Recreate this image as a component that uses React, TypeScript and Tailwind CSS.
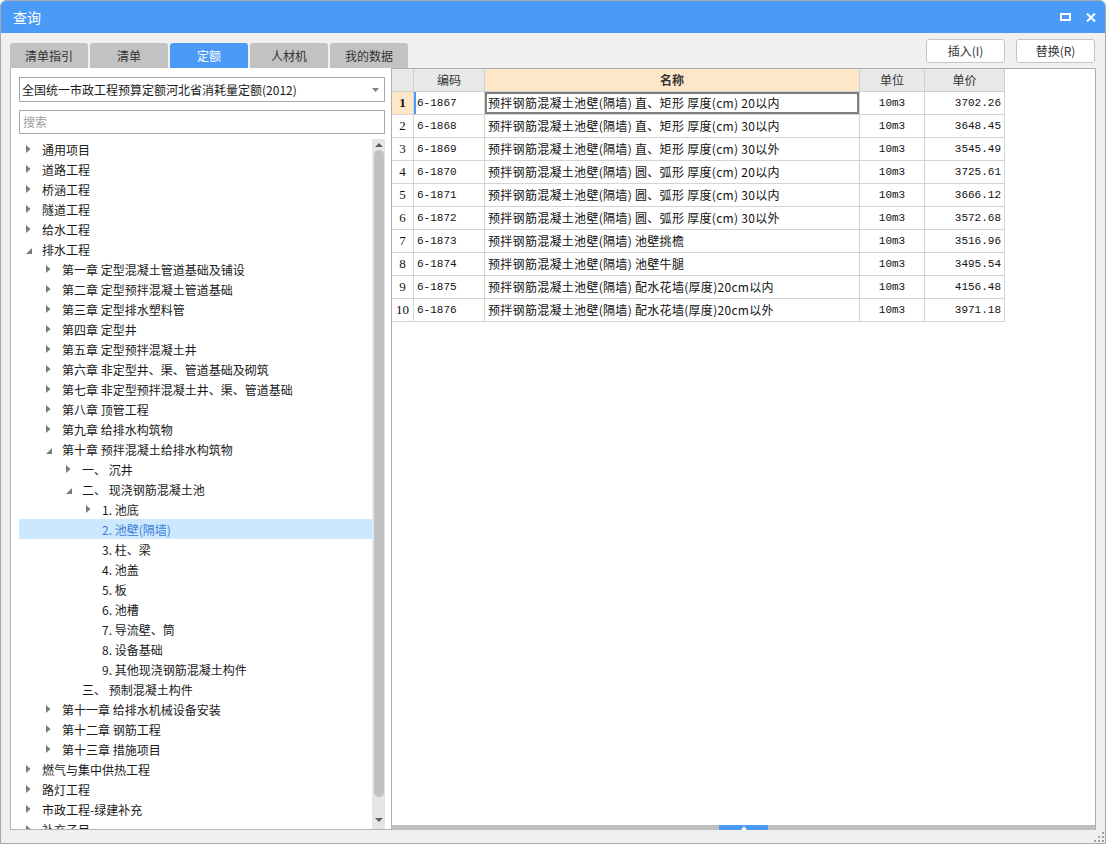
import React from 'react'

type Node = { l: number; t: string; a?: 'r' | 'd'; sel?: boolean }

const tree: Node[] = [
  { l: 0, t: '通用项目', a: 'r' },
  { l: 0, t: '道路工程', a: 'r' },
  { l: 0, t: '桥涵工程', a: 'r' },
  { l: 0, t: '隧道工程', a: 'r' },
  { l: 0, t: '给水工程', a: 'r' },
  { l: 0, t: '排水工程', a: 'd' },
  { l: 1, t: '第一章 定型混凝土管道基础及铺设', a: 'r' },
  { l: 1, t: '第二章 定型预拌混凝土管道基础', a: 'r' },
  { l: 1, t: '第三章 定型排水塑料管', a: 'r' },
  { l: 1, t: '第四章 定型井', a: 'r' },
  { l: 1, t: '第五章 定型预拌混凝土井', a: 'r' },
  { l: 1, t: '第六章 非定型井、渠、管道基础及砌筑', a: 'r' },
  { l: 1, t: '第七章 非定型预拌混凝土井、渠、管道基础', a: 'r' },
  { l: 1, t: '第八章 顶管工程', a: 'r' },
  { l: 1, t: '第九章 给排水构筑物', a: 'r' },
  { l: 1, t: '第十章 预拌混凝土给排水构筑物', a: 'd' },
  { l: 2, t: '一、 沉井', a: 'r' },
  { l: 2, t: '二、 现浇钢筋混凝土池', a: 'd' },
  { l: 3, t: '1. 池底', a: 'r' },
  { l: 3, t: '2. 池壁(隔墙)', sel: true },
  { l: 3, t: '3. 柱、梁' },
  { l: 3, t: '4. 池盖' },
  { l: 3, t: '5. 板' },
  { l: 3, t: '6. 池槽' },
  { l: 3, t: '7. 导流壁、筒' },
  { l: 3, t: '8. 设备基础' },
  { l: 3, t: '9. 其他现浇钢筋混凝土构件' },
  { l: 2, t: '三、 预制混凝土构件' },
  { l: 1, t: '第十一章 给排水机械设备安装', a: 'r' },
  { l: 1, t: '第十二章 钢筋工程', a: 'r' },
  { l: 1, t: '第十三章 措施项目', a: 'r' },
  { l: 0, t: '燃气与集中供热工程', a: 'r' },
  { l: 0, t: '路灯工程', a: 'r' },
  { l: 0, t: '市政工程-绿建补充', a: 'r' },
  { l: 0, t: '补充子目', a: 'r' },
]

const indent = ['pl-[7px]', 'pl-[27px]', 'pl-[47px]', 'pl-[67px]']

const base = '预拌钢筋混凝土池壁(隔墙) '
const rows = [
  ['6-1867', base + '直、矩形 厚度(cm) 20以内', '10m3', '3702.26'],
  ['6-1868', base + '直、矩形 厚度(cm) 30以内', '10m3', '3648.45'],
  ['6-1869', base + '直、矩形 厚度(cm) 30以外', '10m3', '3545.49'],
  ['6-1870', base + '圆、弧形 厚度(cm) 20以内', '10m3', '3725.61'],
  ['6-1871', base + '圆、弧形 厚度(cm) 30以内', '10m3', '3666.12'],
  ['6-1872', base + '圆、弧形 厚度(cm) 30以外', '10m3', '3572.68'],
  ['6-1873', base + '池壁挑檐', '10m3', '3516.96'],
  ['6-1874', base + '池壁牛腿', '10m3', '3495.54'],
  ['6-1875', base + '配水花墙(厚度)20cm以内', '10m3', '4156.48'],
  ['6-1876', base + '配水花墙(厚度)20cm以外', '10m3', '3971.18'],
]

const tabs = ['清单指引', '清单', '定额', '人材机', '我的数据']

const Arrow = ({ a }: { a?: 'r' | 'd' }) => (
  <span className="w-[16px] h-[20px] flex items-center shrink-0">
    {a === 'r' && (
      <svg width="5" height="8" viewBox="0 0 5 8">
        <polygon points="0,0 4.5,4 0,8" fill="#7c7c7c" />
      </svg>
    )}
    {a === 'd' && (
      <svg width="6" height="6" viewBox="0 0 6 6" className="mt-[3px]">
        <polygon points="6,0 6,6 0,6" fill="#7c7c7c" />
      </svg>
    )}
  </span>
)

const mono = "font-['Liberation_Mono','Noto_Sans_CJK_SC',monospace]"

const App = () => {
  return (
    <div className="w-[1106px] h-[844px] flex flex-col bg-[#f0f0f0] border border-[#a8a8a8] rounded-t-[6px] overflow-hidden font-['Noto_Sans_CJK_SC',sans-serif] text-[#1a1a1a]">
      {/* title bar */}
      <div className="h-[32px] shrink-0 bg-[#4a9bf7] flex items-center justify-between pl-[12px] pr-[9px]">
        <span className="text-white text-[14px]">查询</span>
        <div className="flex items-center gap-[15px]">
          <svg width="11" height="8" viewBox="0 0 11 8">
            <rect x="1" y="1" width="9" height="6" fill="none" stroke="white" strokeWidth="2" />
          </svg>
          <svg width="10" height="9" viewBox="0 0 10 9">
            <path d="M1 0.5 L9 8.5 M9 0.5 L1 8.5" stroke="white" strokeWidth="2" />
          </svg>
        </div>
      </div>

      {/* tabs + buttons */}
      <div className="h-[35px] shrink-0 flex justify-between pl-[9px] pr-[10px]">
        <div className="flex items-end gap-[2px]">
          {tabs.map((t) => (
            <div
              key={t}
              className={`w-[78px] h-[25px] rounded-t-[3px] flex items-center justify-center text-[12px] ${
                t === '定额' ? 'bg-[#4a9bf7] text-white' : 'bg-[#c2c2c2] text-[#333]'
              }`}
            >
              {t}
            </div>
          ))}
        </div>
        <div className="flex gap-[11px] mt-[6px]">
          <button className="w-[79px] h-[24px] bg-white border border-[#c4c4c4] rounded-[3px] text-[12px] text-[#333]">
            插入(I)
          </button>
          <button className="w-[79px] h-[24px] bg-white border border-[#c4c4c4] rounded-[3px] text-[12px] text-[#333]">
            替换(R)
          </button>
        </div>
      </div>

      {/* main */}
      <div className="h-[762px] shrink-0 flex ml-[9px] mr-[9px]">
        {/* left panel */}
        <div className="w-[381px] shrink-0 bg-white border-l border-b border-[#b4b4b4] flex flex-col pt-[9px] pl-[8px] pr-[6px]">
          <div className="h-[25px] shrink-0 border border-[#a6a6a6] flex items-center justify-between pl-[2px] pr-[5px] text-[12px]">
            <span>全国统一市政工程预算定额河北省消耗量定额(2012)</span>
            <svg width="7" height="4" viewBox="0 0 7 4">
              <polygon points="0,0 7,0 3.5,4" fill="#808080" />
            </svg>
          </div>
          <div className="h-[24px] shrink-0 mt-[8px] border border-[#a6a6a6] flex items-center pl-[3px] text-[12px] text-[#a0a0a0]">
            搜索
          </div>
          <div className="flex-1 mt-[5px] flex overflow-hidden">
            <div className="w-[353px] overflow-hidden">
              {tree.map((n, i) => (
                <div
                  key={i}
                  className={`h-[20px] flex items-center text-[12px] leading-[20px] whitespace-nowrap ${indent[n.l]} ${
                    n.sel ? 'bg-[#cce8ff] text-[#3d7fd6]' : ''
                  }`}
                >
                  <Arrow a={n.a} />
                  <span className="pt-[1px]">{n.t}</span>
                </div>
              ))}
            </div>
            <div className="w-[13px] bg-[#e6e6e6] flex flex-col items-center">
              <div className="h-[11px] flex items-center">
                <svg width="8" height="4" viewBox="0 0 8 4">
                  <polygon points="0,4 8,4 4,0" fill="#606060" />
                </svg>
              </div>
              <div className="w-[10px] h-[647px] rounded-full bg-[#c1c1c1]" />
              <div className="flex-1" />
              <div className="h-[14px] flex items-start pt-[3px]">
                <svg width="8" height="4" viewBox="0 0 8 4">
                  <polygon points="0,0 8,0 4,4" fill="#606060" />
                </svg>
              </div>
            </div>
          </div>
        </div>

        {/* grid */}
        <div className="flex-1 bg-white border-l border-t border-r border-[#aeaeae] flex flex-col">
          <div className="flex-1">
            <div className="flex h-[23px] text-[12px] text-[#333]">
              <div className="w-[22px] bg-[#e8e8e8] border-r border-b border-[#d0d0d0]" />
              <div className="w-[71px] bg-[#e8e8e8] border-r border-b border-[#d0d0d0] flex items-center justify-center">编码</div>
              <div className="w-[375px] bg-[#fee6c9] border-r border-b border-[#d0d0d0] flex items-center justify-center font-bold">名称</div>
              <div className="w-[65px] bg-[#e8e8e8] border-r border-b border-[#d0d0d0] flex items-center justify-center">单位</div>
              <div className="w-[80px] bg-[#e8e8e8] border-r border-b border-[#d0d0d0] flex items-center justify-center">单价</div>
            </div>
            {rows.map((r, i) => (
              <div key={r[0]} className="flex h-[23px] text-[#111]">
                <div
                  className={`w-[22px] border-r border-b border-[#d4d4d4] flex items-center justify-center font-['Liberation_Serif',serif] text-[13px] ${
                    i === 0 ? 'bg-[#fee6c9] font-bold' : 'bg-white'
                  }`}
                >
                  {i + 1}
                </div>
                <div
                  className={`w-[71px] border-r border-b border-[#d4d4d4] flex items-center pl-[3px] text-[11px] ${mono} ${
                    i === 0 ? 'shadow-[inset_2px_0_0_#4a9bf7]' : ''
                  }`}
                >
                  {r[0]}
                </div>
                <div
                  className={`w-[375px] border-r border-b border-[#d4d4d4] flex items-center pl-[3px] text-[12px] tracking-[0.3px] whitespace-nowrap ${
                    i === 0 ? 'shadow-[inset_0_0_0_2px_#7e7e7e]' : ''
                  }`}
                >
                  {r[1]}
                </div>
                <div className={`w-[65px] border-r border-b border-[#d4d4d4] flex items-center justify-center text-[11px] ${mono}`}>
                  {r[2]}
                </div>
                <div className={`w-[80px] border-r border-b border-[#d4d4d4] flex items-center justify-end pr-[3px] text-[11px] ${mono}`}>
                  {r[3]}
                </div>
              </div>
            ))}
          </div>
          <div className="h-[5px] bg-[#bfbfbf] flex justify-center">
            <div className="w-[49px] h-[5px] bg-[#4a9bf7] flex items-center justify-center">
              <svg width="6" height="4" viewBox="0 0 6 4">
                <polygon points="0,4 6,4 3,0" fill="white" />
              </svg>
            </div>
          </div>
        </div>
      </div>

      {/* bottom strip */}
      <div className="flex-1 relative">
        <svg width="10" height="10" viewBox="0 0 10 10" className="absolute right-[1px] bottom-[1px]">
          <rect x="8" y="0" width="2" height="2" fill="#a0a0a0" />
          <rect x="4" y="4" width="2" height="2" fill="#a0a0a0" />
          <rect x="8" y="4" width="2" height="2" fill="#a0a0a0" />
          <rect x="0" y="8" width="2" height="2" fill="#a0a0a0" />
          <rect x="4" y="8" width="2" height="2" fill="#a0a0a0" />
          <rect x="8" y="8" width="2" height="2" fill="#a0a0a0" />
        </svg>
      </div>
    </div>
  )
}

export default App
